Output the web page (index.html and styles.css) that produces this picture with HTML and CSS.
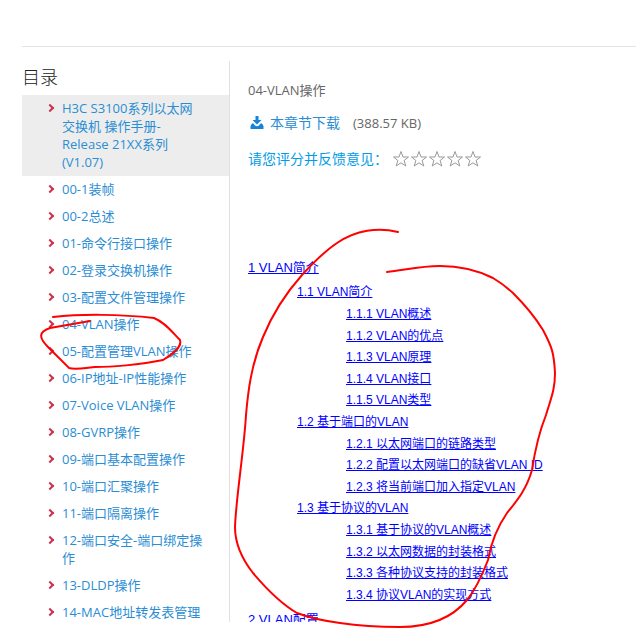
FILE: index.html
```html
<!DOCTYPE html>
<html lang="zh-CN">
<head>
    <meta charset="utf-8" />
    <title>04-VLAN操作</title>
    <link rel="stylesheet" href="styles.css">
</head>
<body>
    <div class="page">
        <div class="sidebar">
            <h2>目录</h2>
            <ul class="menu">
                <li class="current"><a href="#">H3C S3100系列以太网交换机 操作手册-Release 21XX系列(V1.07)</a></li>
                <li><a href="#">00-1装帧</a></li>
                <li><a href="#">00-2总述</a></li>
                <li><a href="#">01-命令行接口操作</a></li>
                <li><a href="#">02-登录交换机操作</a></li>
                <li><a href="#">03-配置文件管理操作</a></li>
                <li><a href="#">04-VLAN操作</a></li>
                <li><a href="#">05-配置管理VLAN操作</a></li>
                <li><a href="#">06-IP地址-IP性能操作</a></li>
                <li><a href="#">07-Voice VLAN操作</a></li>
                <li><a href="#">08-GVRP操作</a></li>
                <li><a href="#">09-端口基本配置操作</a></li>
                <li><a href="#">10-端口汇聚操作</a></li>
                <li><a href="#">11-端口隔离操作</a></li>
                <li><a href="#">12-端口安全-端口绑定操作</a></li>
                <li><a href="#">13-DLDP操作</a></li>
                <li><a href="#">14-MAC地址转发表管理</a></li>
            </ul>
        </div>
        <div class="content">
            <h1>04-VLAN操作</h1>
            <div class="download">
                <svg width="16" height="14" viewBox="0 0 16 14" aria-hidden="true">
                    <path d="M7.500 0h3v4h3L9 8.500 4.500 4h3z" fill="#1583d8" />
                    <path d="M4 7.500L5.500 7.500 7 9.500Q9 11 11 9.500L12.500 7.500H14L15.500 10v2.500q0 .5-.5.5H3q-.5 0-.5-.5V10z" fill="#1583d8" />
                </svg>
                <a href="#">本章节下载</a>
                <span>(388.57 KB)</span>
            </div>
            <div class="rate">
                <span>请您评分并反馈意见：</span>
                <div class="stars">
                    <button type="button" aria-label="1"><svg viewBox="0 0 18 18"><path d="M9 1.500l2 5.500h5.500l-4.400 3.500 1.700 5.500L9 12.800 4.200 16l1.700-5.500L1.500 7H7z" /></svg></button>
                    <button type="button" aria-label="2"><svg viewBox="0 0 18 18"><path d="M9 1.500l2 5.500h5.500l-4.400 3.500 1.700 5.500L9 12.800 4.200 16l1.700-5.500L1.500 7H7z" /></svg></button>
                    <button type="button" aria-label="3"><svg viewBox="0 0 18 18"><path d="M9 1.500l2 5.500h5.500l-4.400 3.500 1.700 5.500L9 12.800 4.200 16l1.700-5.500L1.500 7H7z" /></svg></button>
                    <button type="button" aria-label="4"><svg viewBox="0 0 18 18"><path d="M9 1.500l2 5.500h5.500l-4.400 3.500 1.700 5.500L9 12.800 4.200 16l1.700-5.500L1.500 7H7z" /></svg></button>
                    <button type="button" aria-label="5"><svg viewBox="0 0 18 18"><path d="M9 1.500l2 5.500h5.500l-4.400 3.500 1.700 5.500L9 12.800 4.200 16l1.700-5.500L1.500 7H7z" /></svg></button>
                </div>
            </div>
            <div class="toc">
                <p class="toc1"><a href="#">1 VLAN简介</a></p>
                <p class="toc2"><a href="#">1.1 VLAN简介</a></p>
                <p class="toc3"><a href="#">1.1.1 VLAN概述</a></p>
                <p class="toc3"><a href="#">1.1.2 VLAN的优点</a></p>
                <p class="toc3"><a href="#">1.1.3 VLAN原理</a></p>
                <p class="toc3"><a href="#">1.1.4 VLAN接口</a></p>
                <p class="toc3"><a href="#">1.1.5 VLAN类型</a></p>
                <p class="toc2"><a href="#">1.2 基于端口的VLAN</a></p>
                <p class="toc3"><a href="#">1.2.1 以太网端口的链路类型</a></p>
                <p class="toc3"><a href="#">1.2.2 配置以太网端口的缺省VLAN ID</a></p>
                <p class="toc3"><a href="#">1.2.3 将当前端口加入指定VLAN</a></p>
                <p class="toc2"><a href="#">1.3 基于协议的VLAN</a></p>
                <p class="toc3"><a href="#">1.3.1 基于协议的VLAN概述</a></p>
                <p class="toc3"><a href="#">1.3.2 以太网数据的封装格式</a></p>
                <p class="toc3"><a href="#">1.3.3 各种协议支持的封装格式</a></p>
                <p class="toc3"><a href="#">1.3.4 协议VLAN的实现方式</a></p>
                <p class="toc1"><a href="#">2 VLAN配置</a></p>
            </div>
        </div>
    </div>

    <!-- 手绘标注 -->
    <svg class="marks" width="636" height="628" viewBox="0 0 636 628" aria-hidden="true">
        <path d="M53 317C80 314 120 314 154 318C166 323 172 332 180 340C182 346 176 352 163 360C140 365 110 367 95 367C85 368 75 370 69 368L48 347C39 338 38 332 50 328L90 321" />
        <path d="M398 232C378 227 356 230 337 243C325 251 312 264 302 275C286 293 272 315 263 337C251 365 248 392 246 415C244 450 236 498 235 527C235 545 242 559 253 573C264 586 280 603 297 613C310 618 325 621 340 623C360 626 380 627 400 627C430 627 452 618 467 600C477 588 483 573 488 560C491 543 498 526 507 513C515 503 526 491 532 470C535 450 540 430 546 415C551 398 555 390 555 373C554 353 552 347 543 330C535 317 524 304 513 293C503 284 498 281 493 278C475 269 455 266 440 266C420 266 405 270 387 272" />
    </svg>
</body>
</html>
```
FILE: styles.css
```css
*
{
    box-sizing: border-box;
}
html, body
{
    height: 100%;
}
body
{
    margin: 0;
    padding: 46px 0 6px 22px;
    overflow: hidden;
    background: #fff;
    color: #666;
    font-family: "Open Sans", "Noto Sans CJK SC", sans-serif;
    font-size: 13px;
    line-height: 18px;
}
h1, h2, p, ul
{
    margin: 0;
    padding: 0;
    font-weight: normal;
}
a
{
    color: #2a8dd4;
    text-decoration: none;
}
.page
{
    display: flex;
    height: 100%;
    padding-top: 14px;
    border-top: 1px solid #e4e4e4;
    overflow: hidden;
}
.sidebar
{
    flex: 0 0 208px;
    border-right: 1px solid #e0e0e0;
}
.sidebar h2
{
    padding: 4px 0 6px;
    color: #222;
    font-size: 18px;
    font-weight: 300;
    line-height: 24px;
}
.menu
{
    list-style: none;
}
.menu li
{
    position: relative;
    padding: 4px 25px 5px 40px;
}
.menu li:before
{
    content: "";
    position: absolute;
    left: 25px;
    top: 10px;
    box-sizing: border-box;
    width: 6px;
    height: 6px;
    border: solid #cc3350;
    border-width: 2px 2px 0 0;
    transform: rotate(45deg);
}
.menu .current
{
    background: #ededed;
}
.content
{
    flex: 1;
    padding: 20px 0 0 18px;
}
h1
{
    font-size: 13px;
}
.download
{
    display: flex;
    align-items: center;
    margin-top: 15px;
}
.download a
{
    margin: 0 13px 0 6px;
    font-size: 14px;
}
.rate
{
    display: flex;
    align-items: center;
    margin-top: 18px;
    color: #009ce8;
    font-size: 14px;
}
.stars
{
    display: flex;
    margin-left: 4px;
}
.stars button
{
    width: 18px;
    height: 18px;
    padding: 0;
    border: 0;
    background: none;
}
.stars svg
{
    display: block;
    fill: none;
    stroke: #999;
}
.toc
{
    margin-top: 86px;
    font-family: "Liberation Sans", "Noto Sans CJK SC", sans-serif;
    font-size: 12px;
    line-height: 1.8;
    white-space: nowrap;
}
.toc a
{
    color: #00f;
    text-decoration: underline;
}
.toc .toc1
{
    padding: 2px 0 3px;
    font-size: 13px;
}
.toc2
{
    padding-left: 49px;
}
.toc3
{
    padding-left: 98px;
}
.marks
{
    position: absolute;
    left: 0;
    top: 0;
    pointer-events: none;
    fill: none;
    stroke: #f00;
    stroke-width: 2;
    stroke-linecap: round;
}
```
